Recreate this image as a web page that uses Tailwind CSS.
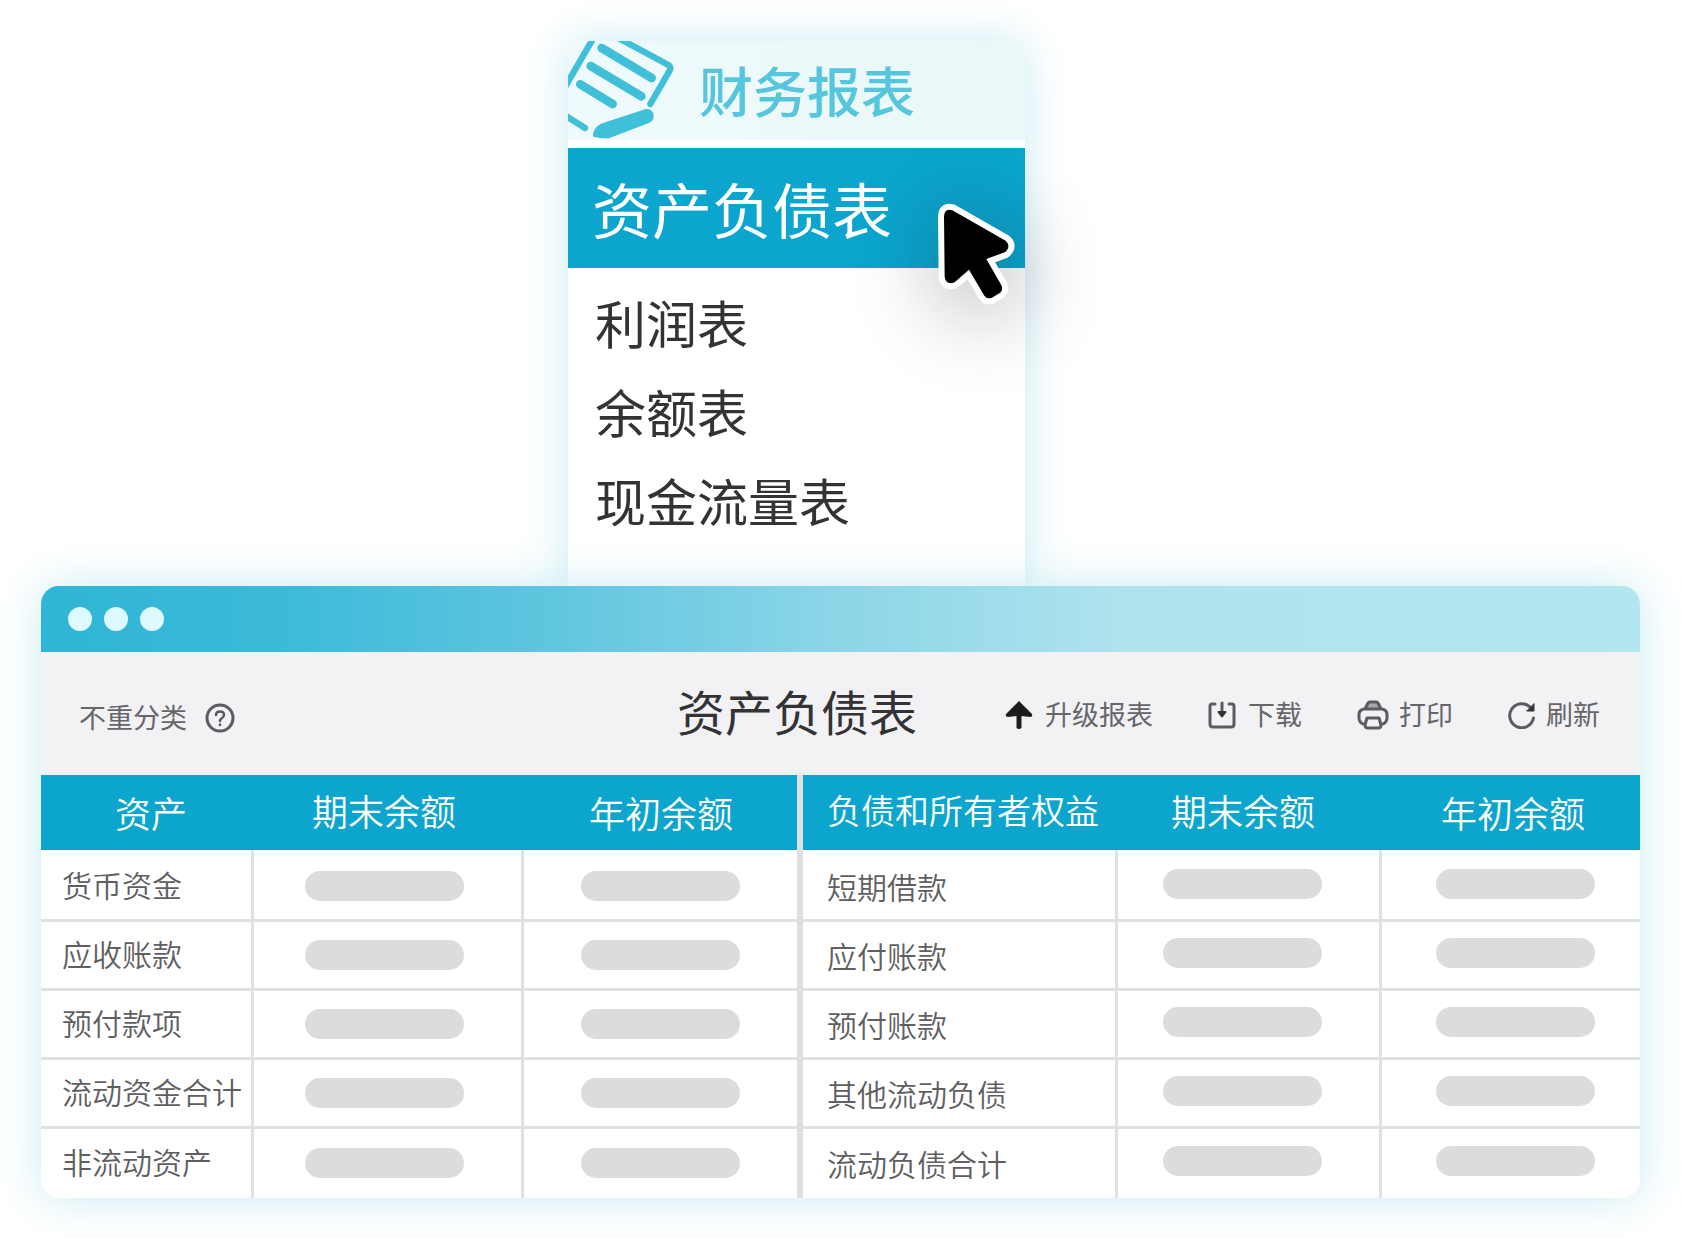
<!DOCTYPE html>
<html lang="zh-CN">
  <head>
    <meta charset="UTF-8" />
    <meta name="viewport" content="width=device-width, initial-scale=1.0" />
    <title>财务报表</title>
    <script src="https://cdn.jsdelivr.net/npm/@tailwindcss/browser@4"></script>
  </head>
  <body class="bg-white font-['Noto_Sans_CJK_SC',sans-serif] text-[#333336]">
    <main class="min-h-screen px-[41px] pt-[41px] pb-10 overflow-hidden">
      <!-- menu -->
      <div class="flex justify-center pr-[88px]">
        <nav
          class="relative w-[457px] h-[545px] rounded-t-2xl bg-white shadow-[0_0_44px_rgba(110,205,220,0.38)]"
        >
          <div
            class="flex items-center h-[99px] rounded-t-2xl overflow-hidden bg-linear-to-r from-[#effafc] to-[#eaf8fa]"
          >
            <svg
              class="w-[107px] h-[99px] shrink-0 mr-6"
              viewBox="84 63 321 297"
              fill="none"
              stroke="#40bfd8"
              stroke-linecap="round"
              stroke-linejoin="round"
            >
              <path
                stroke-width="19"
                d="M158 58 L78 196 M235 54 L384 134 Q394 141 389 152 L331 252 M78 288 L135 324"
              />
              <path
                stroke-width="26"
                d="M185 84 L335 174 M152 138 L304 229 M121 193 L218 252"
              />
              <path
                fill="#40bfd8"
                stroke-width="8"
                d="M163 341 Q168 322 186 314 L314 272 Q334 268 337 285 Q339 299 325 305 L207 350 Q194 353 163 347 Z"
              />
            </svg>
            <h2 class="pb-0.5 text-[54px] leading-none font-medium text-[#55c6dc]">财务报表</h2>
          </div>
          <ul class="pt-2">
            <li>
              <a
                href="#"
                class="flex items-center h-[120px] pl-6 bg-[#0ba5cd] text-white text-[60px]"
                >资产负债表</a
              >
            </li>
            <li class="pt-2.5">
              <a href="#" class="block pl-[27px] text-[51px] leading-[89px]"
                >利润表</a
              >
            </li>
            <li>
              <a href="#" class="block pl-[27px] text-[51px] leading-[89px]"
                >余额表</a
              >
            </li>
            <li>
              <a href="#" class="block pl-[27px] text-[51px] leading-[89px]"
                >现金流量表</a
              >
            </li>
          </ul>
          <!-- mouse pointer -->
          <svg
            class="absolute left-[370px] top-[162px] w-[78px] h-[102px] overflow-visible drop-shadow-[4px_12px_42px_rgba(20,0,20,0.38)]"
            viewBox="1135 190 234 306"
            stroke-linejoin="round"
          >
            <path
              fill="#fff"
              stroke="#fff"
              stroke-width="36"
              d="M1153 230 Q1154 205 1178 212 L1338 303 Q1356 319 1337 337 L1280 358 L1326 438 Q1331 453 1319 461 L1297 474 Q1283 480 1274 468 L1228 390 L1185 428 Q1160 438 1155 412 Z"
            />
            <path
              fill="#000"
              d="M1153 230 Q1154 205 1178 212 L1338 303 Q1356 319 1337 337 L1280 358 L1326 438 Q1331 453 1319 461 L1297 474 Q1283 480 1274 468 L1228 390 L1185 428 Q1160 438 1155 412 Z"
            />
          </svg>
        </nav>
      </div>

      <!-- report window -->
      <section
        class="relative rounded-[18px] shadow-[0_0_44px_rgba(110,205,220,0.38)]"
      >
        <div class="rounded-[18px] overflow-hidden bg-white">
          <div
            class="flex items-center gap-3 h-[66px] pl-[27px] bg-[linear-gradient(90deg,#2fb5d6_0%,#3cbad9_15%,#5ec5df_31%,#8ad5e7_49%,#b0e3ee_68%,#b3e6ef_100%)]"
          >
            <span class="size-6 rounded-full bg-[#dcfaff]"></span>
            <span class="size-6 rounded-full bg-[#dcfaff]"></span>
            <span class="size-6 rounded-full bg-[#dcfaff]"></span>
          </div>

          <header
            class="flex items-center h-[123px] pl-[38px] pr-10 bg-[#f2f2f5] text-[27px] text-[#66666a]"
          >
            <div class="flex items-center gap-[18px] mr-auto pt-2">
              <span>不重分类</span>
              <button type="button" aria-label="帮助" class="size-[30px]">
                <svg
                  viewBox="0 0 30 30"
                  fill="none"
                  stroke="#5c5c60"
                  stroke-width="3"
                  stroke-linecap="round"
                >
                  <circle cx="15" cy="15" r="13" />
                  <path
                    stroke-width="2.5"
                    d="M11 12 Q11 8.500 15 8.500 Q19 8.500 19 12 Q19 14 16.500 15.500 Q15 16.500 15 18 M15 21.500 V22"
                  />
                </svg>
              </button>
            </div>
            <h1 class="text-[48px] mr-[88px] pb-2 text-[#333336]">资产负债表</h1>
            <div class="flex items-center gap-[55px] pt-0.5">
              <button type="button" class="flex items-center gap-3">
                <svg class="w-7 h-7" viewBox="0 0 28 28" fill="#1c1c1f">
                  <path
                    d="M14 0 L27 13 Q28 16 25 16 L16.500 15 V27 Q14 29 11.500 27 V15 L3 16 Q0 16 1 13 Z"
                  />
                </svg>
                升级报表
              </button>
              <button type="button" class="flex items-center gap-3">
                <svg
                  class="w-7 h-7"
                  viewBox="0 0 28 28"
                  fill="none"
                  stroke="#5c5c60"
                  stroke-width="3"
                  stroke-linecap="round"
                  stroke-linejoin="round"
                >
                  <path d="M7 3 H4 Q2 3 2 5 V23 Q2 26 5 26 H23 Q26 26 26 23 V5 Q26 3 24 3 H21" />
                  <path d="M14 2 V10" />
                  <path
                    d="M10.500 11 H17.500 L14 15.500 Z"
                    fill="#333336"
                    stroke="#333336"
                    stroke-width="2"
                  />
                </svg>
                下载
              </button>
              <button type="button" class="flex items-center gap-2.5">
                <svg
                  class="w-8 h-[30px]"
                  viewBox="0 0 32 30"
                  fill="none"
                  stroke="#5c5c60"
                  stroke-width="3"
                  stroke-linejoin="round"
                >
                  <path d="M8 9 L11 3 Q12 2 13 2 H19 Q20 2 21 3 L24 9" fill="#a9a9ad" />
                  <path
                    d="M8 24 H6 Q2 22 2 18 V15 Q2 9 8 9 H24 Q30 9 30 15 V18 Q30 22 26 24 H24"
                  />
                  <path d="M10 18 H22 L24 25 Q24 28 21 28 H11 Q8 28 8 25 Z" />
                </svg>
                打印
              </button>
              <button type="button" class="flex items-center gap-2.5">
                <svg
                  class="w-7 h-7"
                  viewBox="0 0 28 28"
                  fill="none"
                  stroke="#5c5c60"
                  stroke-width="3"
                  stroke-linecap="round"
                >
                  <path d="M22 6 A12 12 0 1 0 25.500 17" />
                  <path
                    d="M26 3 V10 H19 Z"
                    fill="#333336"
                    stroke="#333336"
                    stroke-width="1"
                    stroke-linejoin="round"
                  />
                </svg>
                刷新
              </button>
            </div>
          </header>

          <div class="flex bg-[#dfe0e3] gap-1.5">
            <table class="flex-756 w-0 table-fixed bg-white text-left">
              <colgroup>
                <col class="w-[211px]" />
                <col class="w-[270px]" />
                <col />
              </colgroup>
              <thead class="bg-[#0ba5cd] text-white text-[36px] leading-none">
                <tr class="h-[76px]">
                  <th class="font-[350] pl-[74px]">资产</th>
                  <th class="font-[350] pl-[60px] pb-1">期末余额</th>
                  <th class="font-[350] pl-[67px]">年初余额</th>
                </tr>
              </thead>
              <tbody id="assets" class="text-[30px] leading-none text-[#5f5f62]"></tbody>
            </table>
            <table class="flex-837 w-0 table-fixed bg-white text-left">
              <colgroup>
                <col class="w-[313px]" />
                <col class="w-[264px]" />
                <col />
              </colgroup>
              <thead class="bg-[#0ba5cd] text-white text-[36px] leading-none">
                <tr class="h-[76px]">
                  <th class="font-[350] pl-6 pb-1 text-[34px] whitespace-nowrap">
                    负债和所有者权益
                  </th>
                  <th class="font-[350] pl-[55px] pb-1">期末余额</th>
                  <th class="font-[350] pl-[61px]">年初余额</th>
                </tr>
              </thead>
              <tbody id="debts" class="text-[30px] leading-none text-[#5f5f62]"></tbody>
            </table>
          </div>
        </div>
      </section>
    </main>

    <script>
      const assets = ['货币资金', '应收账款', '预付款项', '流动资金合计', '非流动资产'];
      const debts = ['短期借款', '应付账款', '预付账款', '其他流动负债', '流动负债合计'];

      const pill = '<div class="w-[159px] h-[30px] rounded-full bg-[#dcdcdf]"></div>';

      const renderRows = (id, names, pads) => {
        document.getElementById(id).innerHTML = names
          .map(
            (name) => `
              <tr class="h-[69px] last:h-[71px] border-t-3 border-[#e1e1e4] first:border-white">
                <td class="border-r-3 border-r-[#e1e1e4] whitespace-nowrap font-[350] ${pads[0]}">${name}</td>
                <td class="border-r-3 border-r-[#e1e1e4] ${pads[1]}">${pill}</td>
                <td class="${pads[2]}">${pill}</td>
              </tr>`
          )
          .join('');
      };

      renderRows('assets', assets, ['pl-[21px] pb-1', 'pl-[51px]', 'pl-[57px]']);
      renderRows('debts', debts, ['pl-6', 'pl-[45px] pb-1', 'pl-[54px] pb-1']);
    </script>
  </body>
</html>
